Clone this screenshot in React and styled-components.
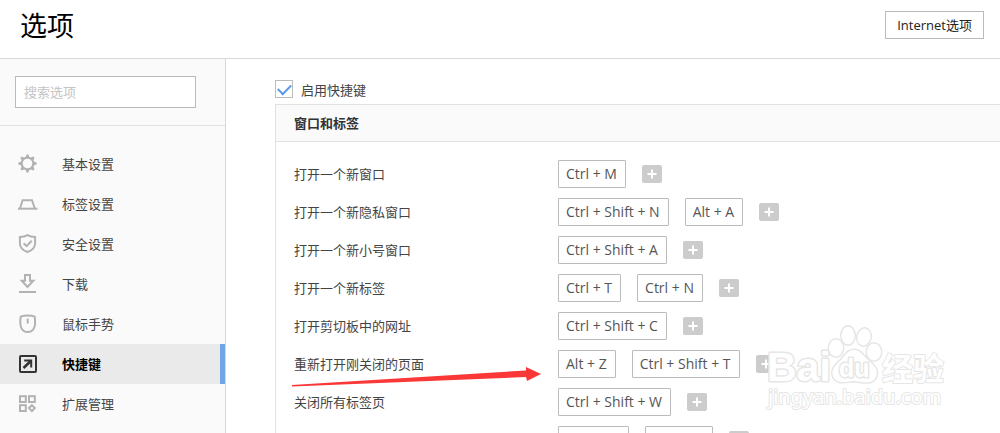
import { useState } from "react"
import styled, { createGlobalStyle } from "styled-components"

const GlobalStyle = createGlobalStyle`
    * {
        box-sizing: border-box;
    }
    body {
        margin: 0;
        background-color: #fff;
        color: #444;
        font-family: "Noto Sans CJK SC", sans-serif;
        font-size: 13px;
    }
    button, input {
        font: inherit;
    }
`

const Page = styled.div`
    position: relative;
    display: flex;
    flex-direction: column;
    height: 100vh;
    overflow: hidden;
`

const Header = styled.header`
    display: flex;
    align-items: flex-start;
    justify-content: space-between;
    height: 59px;
    flex-shrink: 0;
    padding: 11px 16px 0 20px;
    border-bottom: 1px solid #d8d8d8;
`
const Title = styled.h1`
    margin: 0;
    color: #000;
    font-size: 27px;
    font-weight: 400;
    line-height: 28px;
`
const OutlineButton = styled.button`
    height: 28px;
    padding: 0 11px 2px;
    border: 1px solid #bbb;
    background-color: #fff;
    color: #222;
    font-family: "Open Sans", "Noto Sans CJK SC", sans-serif;
`

const Body = styled.div`
    display: flex;
    flex: 1;
    min-height: 0;
`

const Sidebar = styled.aside`
    width: 226px;
    flex-shrink: 0;
    border-right: 1px solid #d8d8d8;
    background-color: #fafafa;
`
const Search = styled.div`
    padding: 17px 29px 17px 15px;
    border-bottom: 1px solid #e0e0e0;
`
const SearchInput = styled.input`
    display: block;
    width: 100%;
    height: 32px;
    padding: 0 8px 2px;
    border: 1px solid #bbb;
    border-radius: 0;
    outline: none;
    background-color: #fff;
    &::placeholder {
        color: #c4c4c4;
    }
`
const Nav = styled.nav`
    padding-top: 18px;
`
const NavItem = styled.a`
    display: flex;
    align-items: center;
    gap: 24px;
    height: 40px;
    padding-left: 17px;
    border-right: 5px solid ${props => props.$active ? "#70a5e8" : "transparent"};
    background-color: ${props => props.$active ? "#eaeaea" : "transparent"};
    color: ${props => props.$active ? "#000" : "#444"};
    font-weight: ${props => props.$active ? 700 : 400};
    text-decoration: none;
    svg {
        color: ${props => props.$active ? "#333" : "#b2b2b2"};
    }
`
const ItemLabel = styled.span`
    padding-bottom: 2px;
`

const Main = styled.main`
    flex: 1;
    min-width: 0;
    padding: 21px 0 0 49px;
`
const CheckLabel = styled.label`
    display: flex;
    align-items: center;
    gap: 8px;
    height: 18px;
    margin-bottom: 6px;
`
const Checkbox = styled.input`
    display: grid;
    place-items: center;
    width: 18px;
    height: 18px;
    margin: 0;
    appearance: none;
    border: 1px solid #bbb;
    background-color: #fff;
    &:checked::before {
        content: "";
        width: 11px;
        height: 6px;
        margin-bottom: 3px;
        border-left: 2px solid #5c9ae8;
        border-bottom: 2px solid #5c9ae8;
        transform: rotate(-45deg);
    }
`
const Panel = styled.section`
    border: 1px solid #e2e2e2;
    border-right: none;
`
const PanelTitle = styled.h2`
    margin: 0;
    padding: 0 18px;
    border-bottom: 1px solid #e2e2e2;
    background-color: #fafafa;
    color: #333;
    font-size: 13px;
    font-weight: 700;
    line-height: 36px;
`
const ShortcutList = styled.ul`
    margin: 0;
    padding: 13px 0;
    list-style: none;
`
const ShortcutRow = styled.li`
    display: grid;
    grid-template-columns: 264px 1fr;
    align-items: center;
    height: 38px;
    padding-left: 18px;
`
const Keys = styled.div`
    display: flex;
    align-items: center;
    gap: 16px;
`
const KeyButton = styled.button`
    height: 28px;
    padding: 0 8px 2px 7px;
    border: 1px solid #bbb;
    border-radius: 1px;
    background-color: #fff;
    color: #555;
    font-family: "Open Sans", sans-serif;
    font-size: 14px;
    white-space: nowrap;
`
const AddButton = styled.button`
    display: flex;
    align-items: center;
    justify-content: center;
    width: 20px;
    height: 18px;
    padding: 0;
    border: none;
    border-radius: 2px;
    background-color: #ccc;
    color: #fff;
`

const Arrow = styled.svg`
    position: absolute;
    left: 291px;
    top: 366px;
    pointer-events: none;
`
const Watermark = styled.svg`
    position: absolute;
    left: 760px;
    top: 320px;
    pointer-events: none;
`

const Icon = ({ children }) => (
    <svg width="21" height="20" viewBox="0 0 21 20" fill="none" stroke="currentColor" strokeWidth="2" aria-hidden="true">
        {children}
    </svg>
)

const GearIcon = () => (
    <Icon>
        <circle cx="10.5" cy="9.5" r="5.8" />
        {[0, 45, 90, 135, 180, 225, 270, 315].map(angle => (
            <path key={angle} d="M8.2 4 L9.6 0.4 H11.4 L12.8 4 Z" fill="currentColor" stroke="none" transform={`rotate(${angle} 10.5 9.5)`} />
        ))}
    </Icon>
)
const TabIcon = () => (
    <Icon>
        <path d="M1 14.7 H20.5" />
        <path d="M3 14.5 L5.6 6.2 H15 L17.8 14.5" />
    </Icon>
)
const ShieldIcon = () => (
    <Icon>
        <path d="M10.5 1.2 C8.4 2.5 5.6 3 2.9 3 V9.2 C2.9 13.6 6 16.4 10.5 18 C15 16.4 18.1 13.6 18.1 9.2 V3 C15.4 3 12.6 2.5 10.5 1.2 Z" />
        <path d="M6.6 9.3 L9.6 12.2 L14.7 6.8" />
    </Icon>
)
const DownloadIcon = () => (
    <Icon>
        <path d="M8 1 H13 V6.8 H16.3 L10.5 13 L4.7 6.8 H8 Z" />
        <path d="M2 18 H19" />
    </Icon>
)
const MouseIcon = () => (
    <Icon>
        <path d="M10.7 1.4 C8 1.4 5.5 1.8 3.7 2.6 C3.2 5.5 3.2 8 3.4 10.5 C3.8 15 6.7 18 10.7 18 C14.7 18 17.6 15 18 10.5 C18.2 8 18.2 5.5 17.7 2.6 C15.9 1.8 13.4 1.4 10.7 1.4 Z" />
        <path d="M10.7 4.6 V9.6" />
    </Icon>
)
const ShortcutIcon = () => (
    <Icon>
        <rect x="3" y="2" width="16" height="16" rx="1" />
        <path d="M6.5 14 L13.5 7.2" strokeWidth="2.6" />
        <path d="M7.2 6.6 H14.2 V13.4" />
    </Icon>
)
const ExtensionIcon = () => (
    <Icon>
        <rect x="3" y="2.2" width="5.8" height="5.8" />
        <rect x="12" y="2.2" width="5.8" height="5.8" />
        <rect x="3" y="11.2" width="5.8" height="5.8" />
        <path d="M14.9 11.2 L17.8 14.1 L14.9 17 L12 14.1 Z" />
    </Icon>
)

const navItems = [
    { label: "基本设置", icon: GearIcon },
    { label: "标签设置", icon: TabIcon },
    { label: "安全设置", icon: ShieldIcon },
    { label: "下载", icon: DownloadIcon },
    { label: "鼠标手势", icon: MouseIcon },
    { label: "快捷键", icon: ShortcutIcon },
    { label: "扩展管理", icon: ExtensionIcon },
]

const shortcuts = [
    { label: "打开一个新窗口", keys: ["Ctrl + M"] },
    { label: "打开一个新隐私窗口", keys: ["Ctrl + Shift + N", "Alt + A"] },
    { label: "打开一个新小号窗口", keys: ["Ctrl + Shift + A"] },
    { label: "打开一个新标签", keys: ["Ctrl + T", "Ctrl + N"] },
    { label: "打开剪切板中的网址", keys: ["Ctrl + Shift + C"] },
    { label: "重新打开刚关闭的页面", keys: ["Alt + Z", "Ctrl + Shift + T"] },
    { label: "关闭所有标签页", keys: ["Ctrl + Shift + W"] },
    { label: "关闭当前标签页", keys: ["Ctrl + F4", "Ctrl + W"] },
]

const App = () => {
    const [active, setActive] = useState("快捷键")
    const [enabled, setEnabled] = useState(true)

    return (
        <Page>
            <GlobalStyle />
            <Header>
                <Title>选项</Title>
                <OutlineButton type="button">Internet选项</OutlineButton>
            </Header>
            <Body>
                <Sidebar>
                    <Search>
                        <SearchInput type="text" placeholder="搜索选项" aria-label="搜索选项" />
                    </Search>
                    <Nav>
                        {navItems.map(({ label, icon: ItemIcon }) => (
                            <NavItem key={label} href="#" $active={label === active} onClick={() => setActive(label)}>
                                <ItemIcon />
                                <ItemLabel>{label}</ItemLabel>
                            </NavItem>
                        ))}
                    </Nav>
                </Sidebar>
                <Main>
                    <CheckLabel>
                        <Checkbox type="checkbox" checked={enabled} onChange={e => setEnabled(e.target.checked)} />
                        启用快捷键
                    </CheckLabel>
                    <Panel>
                        <PanelTitle>窗口和标签</PanelTitle>
                        <ShortcutList>
                            {shortcuts.map(item => (
                                <ShortcutRow key={item.label}>
                                    <ItemLabel>{item.label}</ItemLabel>
                                    <Keys>
                                        {item.keys.map(key => (
                                            <KeyButton key={key} type="button">{key}</KeyButton>
                                        ))}
                                        <AddButton type="button" aria-label="添加">
                                            <svg width="10" height="10" viewBox="0 0 10 10" stroke="currentColor" strokeWidth="2">
                                                <path d="M5 0.5 V9.5 M0.5 5 H9.5" />
                                            </svg>
                                        </AddButton>
                                    </Keys>
                                </ShortcutRow>
                            ))}
                        </ShortcutList>
                    </Panel>
                </Main>
            </Body>
            <Arrow width="251" height="22" viewBox="0 0 251 22" aria-hidden="true">
                <path d="M1 19 V20.5 L235 11 L236 15 L250 8 L235 1 V4.5 Z" fill="#fb3838" />
            </Arrow>
            <Watermark width="200" height="100" viewBox="0 0 200 100" fill="#fff" stroke="#e6e6e6" strokeWidth="3" paintOrder="stroke" strokeLinejoin="round" aria-hidden="true">
                <text x="7" y="61" fontFamily="Liberation Sans, sans-serif" fontSize="41" fontWeight="700">Bai</text>
                <ellipse cx="76" cy="28" rx="7" ry="8.5" />
                <ellipse cx="88" cy="15.5" rx="6.5" ry="9" />
                <ellipse cx="104" cy="17" rx="6.5" ry="8.5" transform="rotate(12 104 17)" />
                <ellipse cx="114" cy="32" rx="7" ry="8.5" />
                <path d="M94 30 C87 30 85 36 80 41 C74 46 71 51 73 56 C76 64 84 62 94 61 C104 62 112 65 116 57 C119 51 115 46 109 41 C103 36 101 30 94 30 Z" />
                <text x="79" y="57" fontFamily="Liberation Sans, sans-serif" fontSize="25" fontWeight="700">du</text>
                <text x="122" y="60" fontFamily="Noto Sans CJK SC, sans-serif" fontSize="31" fontWeight="700" strokeWidth="2">经验</text>
                <text x="8" y="84" fontFamily="Noto Sans, sans-serif" fontSize="20" strokeWidth="2">jingyan.baidu.com</text>
            </Watermark>
        </Page>
    )
}

export default App
